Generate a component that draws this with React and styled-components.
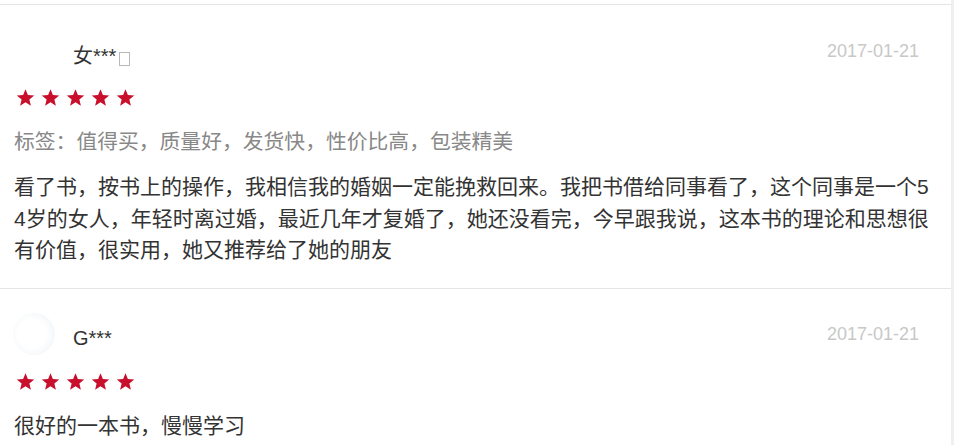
import styled, { createGlobalStyle } from "styled-components";

const GlobalStyle = createGlobalStyle`
  body {
    margin: 0;
    background: #fff;
    font-family: "Liberation Sans", "Noto Sans CJK SC", sans-serif;
  }
`;

const Page = styled.div`
  width: 954px;
  height: 445px;
  box-sizing: border-box;
  padding-top: 4px;
  border-right: 3px solid #efefef;
  overflow: hidden;
`;

const ReviewList = styled.ul`
  list-style: none;
  margin: 0;
  padding: 0;
  border-top: 1px solid #e5e5e5;
`;

const ReviewItem = styled.li`
  padding: 24px 17px 22px 14px;
  border-bottom: 1px solid #e5e5e5;

  &:last-child {
    border-bottom: none;
  }
`;

const Header = styled.div`
  display: flex;
  align-items: center;
  height: 42px;
`;

const Avatar = styled.div`
  width: 42px;
  height: 42px;
  margin-left: -1px;
  border-radius: 50%;
  flex-shrink: 0;
  background: ${(p) =>
    p.$faded
      ? "radial-gradient(circle at 45% 50%, #ffffff 0%, #ffffff 45%, #f5f8fa 70%, #fdfdfe 90%, #fff 100%)"
      : "#fff"};
`;

const Name = styled.span`
  margin-left: 18px;
  margin-top: 9px;
  font-size: 20px;
  color: #333;
  display: flex;
  align-items: flex-end;
`;

const Tofu = styled.span`
  display: inline-block;
  width: 9px;
  height: 12px;
  margin-left: 3px;
  margin-bottom: 3px;
  border: 1px solid #b8b8b8;
`;

const Date = styled.span`
  margin-left: auto;
  margin-right: 15px;
  margin-top: 2px;
  font-size: 18px;
  color: #c8c8c8;
`;

const Stars = styled.div`
  display: flex;
  gap: 6px;
  margin: 17px 0 0 2px;
  height: 19px;
`;

const Star = () => (
  <svg width="19" height="19" viewBox="0 0 24 24">
    <polygon
      fill="#c80f2c"
      points="12,1.5 15,8.9 23,9.4 16.9,14.5 18.8,22.4 12,18.1 5.2,22.4 7.1,14.5 1,9.4 9,8.9"
    />
  </svg>
);

const Tags = styled.p`
  margin: 19px 0 0;
  font-size: 20.8px;
  line-height: 31.5px;
  color: #888;
`;

const Content = styled.p`
  margin: ${(p) => (p.$afterTags ? "13.5px" : "19px")} 0 0;
  font-size: 21px;
  line-height: 31.5px;
  color: #333;
  word-break: break-all;
`;

const reviews = [
  {
    name: "女***",
    tofu: true,
    date: "2017-01-21",
    tags: "标签：值得买，质量好，发货快，性价比高，包装精美",
    text: "看了书，按书上的操作，我相信我的婚姻一定能挽救回来。我把书借给同事看了，这个同事是一个54岁的女人，年轻时离过婚，最近几年才复婚了，她还没看完，今早跟我说，这本书的理论和思想很有价值，很实用，她又推荐给了她的朋友",
  },
  {
    name: "G***",
    faded: true,
    date: "2017-01-21",
    text: "很好的一本书，慢慢学习",
  },
];

export default function App() {
  return (
    <>
      <GlobalStyle />
      <Page>
        <ReviewList>
          {reviews.map((r, i) => (
            <ReviewItem key={i}>
              <Header>
                <Avatar $faded={r.faded} />
                <Name>
                  {r.name}
                  {r.tofu && <Tofu />}
                </Name>
                <Date>{r.date}</Date>
              </Header>
              <Stars>
                {[0, 1, 2, 3, 4].map((s) => (
                  <Star key={s} />
                ))}
              </Stars>
              {r.tags && <Tags>{r.tags}</Tags>}
              <Content $afterTags={!!r.tags}>{r.text}</Content>
            </ReviewItem>
          ))}
        </ReviewList>
      </Page>
    </>
  );
}
